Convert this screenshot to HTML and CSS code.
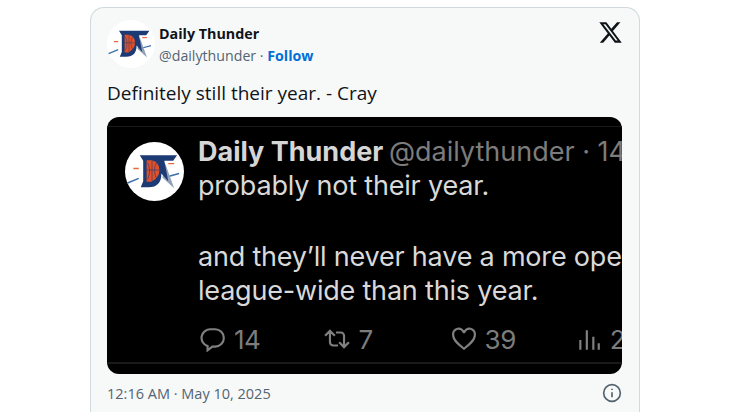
FILE: index.html
```html
<!DOCTYPE html>
<html lang="en">
<head>
<meta charset="utf-8">
<title>Daily Thunder</title>
<link rel="stylesheet" href="styles.css">
</head>
<body>
<svg class="defs" width="0" height="0" aria-hidden="true">
  <symbol id="logo" viewBox="0 0 60 60">
    <circle cx="30" cy="30" r="30" fill="#fff"/>
    <path d="M2 42 L14 37" stroke="#3d6fa8" stroke-width="1.600"/>
    <path d="M8.500 27 H14" stroke="#e8683c" stroke-width="1.600"/>
    <path d="M44 22 H50" stroke="#e8683c" stroke-width="1.400"/>
    <path d="M44 35 L55 32" stroke="#3d6fa8" stroke-width="1.600"/>
    <path d="M41 22 L50 47 L38 36 Z" fill="#8fa0b8"/>
    <path d="M15 13.500 H53 L49 19 H40 L44 40 L37 32 Q37 46 24 46 H16 L18.500 40 V19 Z" fill="#1c3a74"/>
    <path d="M22 18.500 H27 Q35 20 35 28.500 Q35 36 27 40.500 H22 Z" fill="#e2502a"/>
    <path d="M27.500 19 V40 M22 28.500 H35 M23 21 Q27 28.500 23 38 M32 21 Q28 28.500 32 37" stroke="#1c3a74" stroke-width=".6" fill="none"/>
  </symbol>
</svg>
<article class="card">
  <header class="head">
    <svg class="avatar"><use href="#logo"/></svg>
    <div class="who">
      <div class="name">Daily Thunder</div>
      <div class="handle">@dailythunder · <a class="follow" href="#">Follow</a></div>
    </div>
    <svg class="xlogo" viewBox="0 0 24 24"><path d="M18.244 2.250h3.308l-7.227 8.260 8.502 11.240H16.170l-5.214-6.817L4.990 21.750H1.680l7.730-8.835L1.254 2.250H8.080l4.713 6.231zm-1.161 17.520h1.833L7.084 4.126H5.117z"/></svg>
  </header>
  <p class="tweet">Definitely still their year. - Cray</p>
  <div class="shot">
    <div class="shot-rule"></div>
    <div class="shot-main">
      <svg class="shot-avatar"><use href="#logo"/></svg>
      <div class="shot-text">
        <div class="shot-head"><b>Daily Thunder</b> <span>@dailythunder · 14</span></div>
        <div class="shot-line">probably not their year.</div>
        <div class="shot-line shot-gap">and they’ll never have a more ope</div>
        <div class="shot-line">league-wide than this year.</div>
      </div>
    </div>
    <div class="stats">
      <div class="stat s1"><svg viewBox="0 0 24 24"><path d="M10 3h4a8 8 0 0 1 0 16h-2.600L7 22.400V18.600A8 8 0 0 1 10 3z"/></svg>14</div>
      <div class="stat s2"><svg viewBox="0 0 24 24"><path d="M1 9l4.500-4.500L10 9M5.500 5v10a3 3 0 0 0 3 3H13M23 15l-4.500 4.500L14 15M18.500 19V9a3 3 0 0 0-3-3H11"/></svg>7</div>
      <div class="stat s3"><svg viewBox="0 0 24 24"><path d="M12 21C7 17 2 13 2 8.500A5 5 0 0 1 12 6.500 5 5 0 0 1 22 8.500C22 13 17 17 12 21z"/></svg>39</div>
      <div class="stat s4"><svg viewBox="0 0 24 24"><path d="M4 22v-9M10 22V4M16 22v-12M21 22v-6"/></svg>2</div>
    </div>
  </div>
  <footer class="foot">
    <time>12:16 AM · May 10, 2025</time>
    <svg class="info" viewBox="0 0 24 24"><circle cx="12" cy="12" r="10"/><path d="M12 11v6M12 7v1.500"/></svg>
  </footer>
</article>
</body>
</html>
```
FILE: styles.css
```css
html, body { margin: 0; height: 100%; overflow: hidden; background: #fff; }
body { padding: 7px 91px 0 90px; box-sizing: border-box; font-family: "Open Sans", "Noto Sans", sans-serif; }
.defs { display: block; height: 0; }
.card {
  box-sizing: border-box; height: 405px; padding: 10px 16px 0;
  background: #f7f9f9; border: 1px solid #cfd9de; border-bottom: 0; border-radius: 14px 14px 0 0;
}
.head { display: flex; align-items: flex-start; height: 50px; }
.avatar { width: 48px; height: 48px; margin: 2px 4px 0 0; flex: none; }
.who { flex: 1; padding-top: 6px; }
.name { font-size: 14.300px; font-weight: 700; line-height: 20px; color: #0f1419; }
.handle { font-size: 14.200px; line-height: 20px; margin-top: 2px; color: #536471; }
.follow { color: #006fd6; font-weight: 700; text-decoration: none; }
.xlogo { width: 25px; height: 25px; margin: 2px 0 0 0; fill: #0f1419; flex: none; }
.tweet { margin: 13px 0 0; font-size: 19px; line-height: 24px; color: #0f1419; }
.shot {
  margin-top: 12px; width: 515px; height: 257px; background: #000; border-radius: 12px;
  box-sizing: border-box; overflow: hidden;
  display: flex; flex-direction: column; font-family: Inter, Roboto, sans-serif; color: #d9d9d9;
}
.shot-rule { height: 9px; flex: none; border-bottom: 1px solid #1a1a1a; }
.shot-main { display: flex; padding: 15px 0 0 18px; height: 189px; box-sizing: border-box; }
.shot-avatar { width: 59px; height: 59px; flex: none; margin-right: 14px; }
.shot-text { font-size: 27px; line-height: 36px; white-space: nowrap; min-width: 0; margin-top: -8px; overflow: hidden; }
.shot-head b { font-weight: 700; color: #d6d6d6; }
.shot-head span { color: #7c7c7c; margin-left: -2px; }
.shot-line { letter-spacing: -0.2px; margin-top: -2px; }
.shot-gap { margin-top: 35px; }
.stats { display: flex; align-items: center; height: 46px; font-size: 26px; color: #7c7c7c; border-bottom: 2px solid #1a1a1a; white-space: nowrap; overflow: hidden; flex: none; }
.stat { display: flex; align-items: center; gap: 8px; letter-spacing: -0.5px; }
.stat svg { width: 26px; height: 26px; fill: none; stroke: #808080; stroke-width: 2; flex: none; }
.s1 { margin-left: 93px; }
.s2 { margin-left: 64px; }
.s3 { margin-left: 78px; }
.s4 { margin-left: 60px; }
.foot { display: flex; align-items: center; justify-content: space-between; margin-top: 9px; height: 20px; font-size: 14.500px; color: #536471; }
.info { width: 20px; height: 20px; margin-right: 1px; fill: none; stroke: #536471; stroke-width: 2; }
```
